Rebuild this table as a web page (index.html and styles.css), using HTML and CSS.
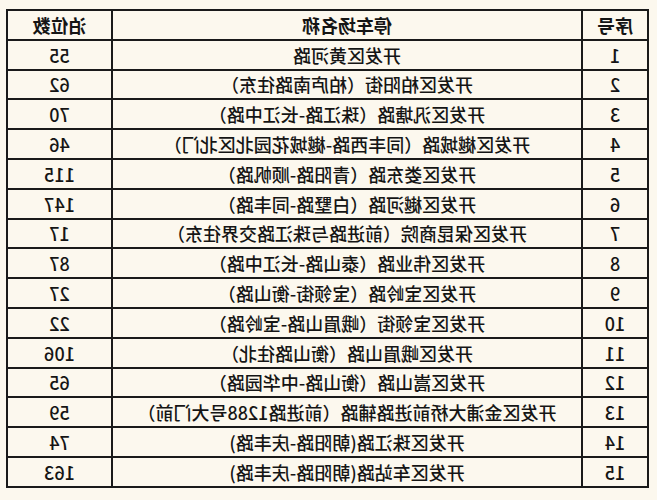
FILE: index.html
```html
<!DOCTYPE html>
<html lang="zh">
<head>
<meta charset="utf-8">
<link rel="stylesheet" href="styles.css">
</head>
<body>
<div class="page">
<table class="parking">
<colgroup><col class="c-no"><col class="c-name"><col class="c-cnt"></colgroup>
<thead>
<tr><th>序号</th><th>停车场名称</th><th>泊位数</th></tr>
</thead>
<tbody>
<tr><td>1</td><td>开发区黄河路</td><td>55</td></tr>
<tr><td>2</td><td>开发区柏阳街（柏庐南路往东）</td><td>62</td></tr>
<tr><td>3</td><td>开发区汎塘路（珠江路-长江中路）</td><td>70</td></tr>
<tr><td>4</td><td>开发区樾城路（同丰西路-樾城花园北区北门）</td><td>46</td></tr>
<tr><td>5</td><td>开发区娄东路（青阳路-顺帆路）</td><td>115</td></tr>
<tr><td>6</td><td>开发区樾河路（白墅路-同丰路）</td><td>147</td></tr>
<tr><td>7</td><td>开发区保昆商院（前进路与珠江路交界往东）</td><td>17</td></tr>
<tr><td>8</td><td>开发区伟业路（泰山路-长江中路）</td><td>87</td></tr>
<tr><td>9</td><td>开发区宝岭路（宝领街-衡山路）</td><td>27</td></tr>
<tr><td>10</td><td>开发区宝领街（峨眉山路-宝岭路）</td><td>22</td></tr>
<tr><td>11</td><td>开发区峨眉山路（衡山路往北）</td><td>106</td></tr>
<tr><td>12</td><td>开发区嵩山路（衡山路-中华园路）</td><td>65</td></tr>
<tr><td>13</td><td>开发区金浦大桥前进路辅路（前进路1288号大门前）</td><td>59</td></tr>
<tr><td>14</td><td>开发区珠江路(朝阳路-庆丰路)</td><td>74</td></tr>
<tr><td>15</td><td>开发区车站路(朝阳路-庆丰路)</td><td>163</td></tr>
</tbody>
</table>
</div>
</body>
</html>
```
FILE: styles.css
```css
html, body {
  margin: 0;
  padding: 0;
  background: #fcf8ee;
}
body {
  font-family: "Noto Sans CJK SC", "Noto Sans", sans-serif;
  color: #151515;
}
.page {
  padding: 9px 8px 0 8px;
  transform: scaleX(-1);
}
.parking {
  width: 641px;
  border-collapse: collapse;
  table-layout: fixed;
  border: 2px solid #1a1a1a;
}
.c-no { width: 66px; }
.c-name { width: 470px; }
.c-cnt { width: 105px; }
.parking th,
.parking td {
  border: 2px solid #1a1a1a;
  height: 27.8px;
  padding: 0;
  text-align: center;
  vertical-align: middle;
  font-size: 18px;
  line-height: 1;
  white-space: nowrap;
}
.parking th {
  font-weight: 700;
}
.parking td {
  font-weight: 500;
}
```
